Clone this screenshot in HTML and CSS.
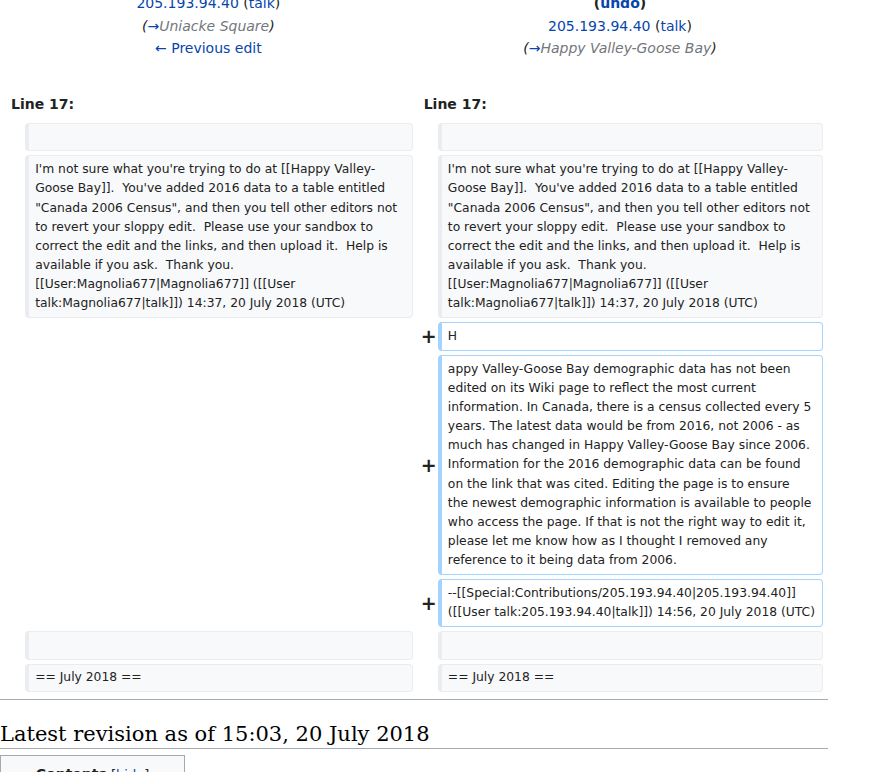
FILE: index.html
```html
<!DOCTYPE html>
<html lang="en">
<head>
<meta charset="utf-8">
<title>Diff</title>
<link rel="stylesheet" href="styles.css">
</head>
<body>
<div class="page">
  <div class="diff">
    <div class="title otitle">
      <div class="tline"><strong><a href="#">Revision as of 14:56, 20 July 2018</a> (<a href="#">edit</a>)</strong></div>
      <div class="tline"><a href="#">205.193.94.40</a> (<a href="#">talk</a>)</div>
      <div class="tline"><span class="comment">(<a href="#" class="arrow">→</a><span class="autocomment">Uniacke Square</span>)</span></div>
      <div class="tline"><a href="#">← Previous edit</a></div>
    </div>
    <div class="title ntitle">
      <div class="tline"><strong><a href="#">Latest revision as of 15:03, 20 July 2018</a> (<a href="#">edit</a>)<br>(<a href="#">undo</a>)</strong></div>
      <div class="tline"><a href="#">205.193.94.40</a> (<a href="#">talk</a>)</div>
      <div class="tline"><span class="comment">(<a href="#" class="arrow">→</a><span class="autocomment">Happy Valley-Goose Bay</span>)</span></div>
      <div class="tline">&nbsp;</div>
    </div>

    <div class="lineno">Line 17:</div>
    <div class="lineno">Line 17:</div>

    <div class="marker"></div>
    <div class="cell ctx"><br></div>
    <div class="marker"></div>
    <div class="cell ctx"><br></div>

    <div class="marker"></div>
    <div class="cell ctx">I'm not sure what you're trying to do at [[Happy Valley-Goose Bay]].  You've added 2016 data to a table entitled "Canada 2006 Census", and then you tell other editors not to revert your sloppy edit.  Please use your sandbox to correct the edit and the links, and then upload it.  Help is available if you ask.  Thank you. [[User:Magnolia677|Magnolia677]] ([[User talk:Magnolia677|talk]]) 14:37, 20 July 2018 (UTC)</div>
    <div class="marker"></div>
    <div class="cell ctx">I'm not sure what you're trying to do at [[Happy Valley-Goose Bay]].  You've added 2016 data to a table entitled "Canada 2006 Census", and then you tell other editors not to revert your sloppy edit.  Please use your sandbox to correct the edit and the links, and then upload it.  Help is available if you ask.  Thank you. [[User:Magnolia677|Magnolia677]] ([[User talk:Magnolia677|talk]]) 14:37, 20 July 2018 (UTC)</div>

    <div class="empty"></div>
    <div class="empty"></div>
    <div class="marker plus">+</div>
    <div class="cell add">H</div>

    <div class="empty"></div>
    <div class="empty"></div>
    <div class="marker plus">+</div>
    <div class="cell add">appy Valley-Goose Bay demographic data has not been edited on its Wiki page to reflect the most current information. In Canada, there is a census collected every 5 years. The latest data would be from 2016, not 2006 - as much has changed in Happy Valley-Goose Bay since 2006. Information for the 2016 demographic data can be found on the link that was cited. Editing the page is to ensure<br>the newest demographic information is available to people who access the page. If that is not the right way to edit it, please let me know how as I thought I removed any reference to it being data from 2006.</div>

    <div class="empty"></div>
    <div class="empty"></div>
    <div class="marker plus">+</div>
    <div class="cell add">--[[Special:Contributions/205.193.94.40|205.193.94.40]] ([[User talk:205.193.94.40|talk]]) 14:56, 20 July 2018 (UTC)</div>

    <div class="marker"></div>
    <div class="cell ctx"><br></div>
    <div class="marker"></div>
    <div class="cell ctx"><br></div>

    <div class="marker"></div>
    <div class="cell ctx">== July 2018 ==</div>
    <div class="marker"></div>
    <div class="cell ctx">== July 2018 ==</div>
  </div>

  <hr class="diff-hr">
  <h2 class="current-title">Latest revision as of 15:03, 20 July 2018</h2>

  <div class="toc">
    <div class="toctitle"><span class="toc-heading">Contents</span> <span class="toctoggle">[<a href="#">hide</a>]</span></div>
    <ul class="toc-list">
      <li>1 Happy Valley-Goose Bay</li>
      <li>2 July 2018</li>
    </ul>
  </div>
</div>
</body>
</html>
```

FILE: styles.css
```css
html, body {
  margin: 0;
  padding: 0;
  background: #ffffff;
}

body {
  font-family: "DejaVu Sans", sans-serif;
  font-size: 14px;
  line-height: 1.6;
  color: #222222;
}

a {
  color: #0645ad;
  text-decoration: none;
}

.page {
  width: 828px;
  margin-top: -38.5px;
}

.diff {
  display: grid;
  grid-template-columns: 17px 387.7px 17px 385.6px;
  column-gap: 4px;
  row-gap: 4px;
  padding: 4px;
}

.title {
  grid-column: span 2;
  text-align: center;
  padding: 4.6px 7px 1.1px;
}

.comment {
  font-style: italic;
}

.comment .arrow {
  font-style: normal;
}

.autocomment {
  color: #72777d;
}

.lineno {
  grid-column: span 2;
  font-weight: bold;
  padding: 5.6px 7px 3.6px;
}

.marker {
  align-self: center;
  text-align: right;
  font-weight: bold;
  font-size: 19px;
  line-height: 1.2;
}

.plus {
  margin-right: -3px;
}

.cell {
  font-size: 12.32px;
  line-height: 19.14px;
  padding: 3.8px 6.16px;
  border: 1px solid #eaecf0;
  border-left-width: 4px;
  border-radius: 4px;
  white-space: pre-wrap;
  overflow-wrap: break-word;
  color: #222222;
}

.ctx {
  background: #f8f9fa;
}

.add {
  background: #ffffff;
  border-color: #a3d3ff;
}

.diff-hr {
  height: 0;
  border: 0;
  border-top: 1px solid #a2a9b1;
  margin: 2.8px 0;
}

.current-title {
  font-family: "DejaVu Serif", serif;
  font-weight: normal;
  font-size: 21px;
  line-height: 1.3;
  margin: 21px 0 6px;
  padding: 0;
  border-bottom: 1px solid #a2a9b1;
  color: #000000;
}

.toc {
  width: 169px;
  border: 1px solid #a2a9b1;
  background: #f8f9fa;
  padding: 7px;
  font-size: 13px;
}

.toctitle {
  text-align: center;
}

.toc-heading {
  font-weight: bold;
  font-size: 14px;
}

.toctoggle {
  font-size: 13px;
}

.toc-list {
  margin: 4px 0 0;
  padding: 0;
  list-style: none;
}
```
